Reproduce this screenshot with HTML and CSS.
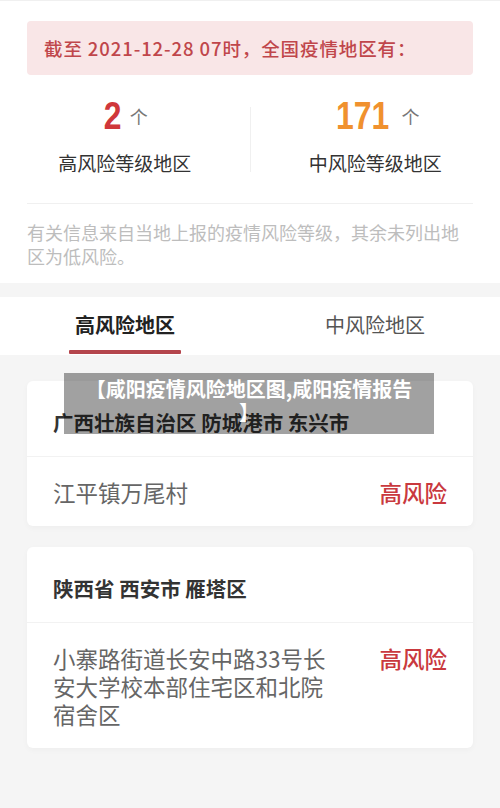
FILE: index.html
```html
<!DOCTYPE html>
<html lang="zh-CN">
<head>
    <meta charset="UTF-8">
    <meta name="viewport" content="width=device-width, initial-scale=1.0">
    <title>咸阳疫情风险地区</title>
    <link rel="stylesheet" href="styles.css">
</head>
<body>
    <div class="summary">
        <div class="notice">截至 2021-12-28 07时，全国疫情地区有：</div>

        <div class="stats">
            <div class="stat">
                <div class="stat-num"><span class="num high">2</span><span class="unit">个</span></div>
                <div class="stat-label">高风险等级地区</div>
            </div>
            <div class="stats-divider"></div>
            <div class="stat">
                <div class="stat-num"><span class="num mid">171</span><span class="unit">个</span></div>
                <div class="stat-label">中风险等级地区</div>
            </div>
        </div>

        <p class="tip">有关信息来自当地上报的疫情风险等级，其余未列出地区为低风险。</p>
    </div>

    <div class="tabs">
        <div class="tab active">高风险地区</div>
        <div class="tab">中风险地区</div>
    </div>

    <div class="list">
        <div class="card">
            <div class="card-head">广西壮族自治区 防城港市 东兴市</div>
            <div class="card-row">
                <div class="place">江平镇万尾村</div>
                <div class="level">高风险</div>
            </div>
        </div>

        <div class="card">
            <div class="card-head">陕西省 西安市 雁塔区</div>
            <div class="card-row">
                <div class="place">小寨路街道长安中路33号长安大学校本部住宅区和北院宿舍区</div>
                <div class="level">高风险</div>
            </div>
        </div>
    </div>

    <!-- 标题浮层 -->
    <div class="caption">【咸阳疫情风险地区图,咸阳疫情报告】</div>
</body>
</html>
```

FILE: styles.css
```css
body {
    font-family: "Noto Sans CJK SC", "Noto Sans", sans-serif;
    background-color: #f5f5f5;
    margin: 0;
    padding: 0;
    position: relative;
    height: 808px;
    overflow: hidden;
}

.summary {
    background: #fff;
    padding: 20px 0 15px;
    border-top: 1px solid #f0f0f0;
}

.notice {
    margin: 0 27px;
    background-color: #f9e6e7;
    color: #c0464b;
    border-radius: 4px;
    height: 54px;
    line-height: 54px;
    padding: 0 17px;
    font-size: 18.5px;
    letter-spacing: 0.9px;
    font-weight: 500;
}

.stats {
    display: flex;
    align-items: flex-start;
    margin: 0 27px;
    padding: 19px 0 27px;
    border-bottom: 1px solid #f0f0f0;
}

.stat {
    flex: 1;
    text-align: center;
}

.stat:first-child {
    margin-left: -27px;
}

.stat:last-child {
    margin-right: -27px;
}

.stats-divider {
    width: 1px;
    height: 65px;
    margin-top: 13px;
    background: #f0f0f0;
}

.stat-num {
    height: 44px;
    line-height: 44px;
}

.num {
    display: inline-block;
    font-family: "Liberation Sans", Arial, sans-serif;
    font-weight: bold;
    font-size: 38px;
    transform: scaleX(0.84);
    vertical-align: top;
}

.num.high {
    color: #d0373b;
}

.num.mid {
    color: #f0912e;
}

.unit {
    display: inline-block;
    font-size: 18px;
    color: #777;
    margin-left: 7px;
    vertical-align: top;
}

.stat-label {
    font-size: 19px;
    color: #333;
    margin-top: 12px;
    line-height: 26px;
}

.tip {
    margin: 16px 27px 0;
    font-size: 18px;
    line-height: 24px;
    color: #bdbdbd;
}

.tabs {
    display: flex;
    background: #fff;
    margin-top: 14px;
    height: 58px;
}

.tab {
    flex: 1;
    text-align: center;
    font-size: 20px;
    line-height: 56px;
    color: #555;
}

.tab.active {
    color: #222;
    font-weight: bold;
    position: relative;
}

.tab.active::after {
    content: "";
    position: absolute;
    left: 69px;
    width: 112px;
    bottom: 1px;
    height: 4px;
    background: #b4454c;
    border-radius: 1px;
}

.list {
    padding: 26px 27px 0;
    display: flex;
    flex-direction: column;
    gap: 21px;
}

.card {
    background: #fff;
    border-radius: 6px;
    box-shadow: 0 2px 6px rgba(0, 0, 0, 0.03);
}

.card-head {
    font-size: 20.5px;
    font-weight: bold;
    color: #333;
    height: 76px;
    box-sizing: border-box;
    padding: 6px 26px 0;
    line-height: 70px;
    border-bottom: 1px solid #f2f2f2;
}

.card-row {
    display: flex;
    justify-content: space-between;
    align-items: flex-start;
    padding: 21px 26px 20px;
}

.place {
    font-size: 22.5px;
    color: #666;
    line-height: 28px;
    width: 286px;
}

.level {
    font-size: 22.5px;
    color: #c9393e;
    line-height: 28px;
    font-weight: 500;
}

.caption {
    position: absolute;
    left: 64px;
    top: 373px;
    width: 370px;
    height: 61px;
    box-sizing: border-box;
    padding: 4px 17px 0;
    background: rgba(0, 0, 0, 0.37);
    color: #fff;
    font-weight: bold;
    font-size: 20px;
    line-height: 23px;
    text-align: center;
    line-break: anywhere;
}
```
